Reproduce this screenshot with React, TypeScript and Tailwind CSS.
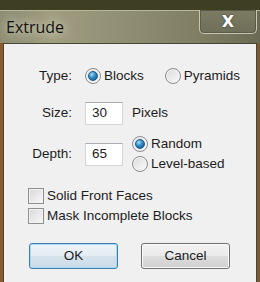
import type { ReactNode } from 'react'

function Radio({ checked, label }: { checked?: boolean; label: string }) {
  return (
    <div className="flex items-center h-5">
      <span className="relative w-[16px] h-[16px] rounded-full border border-[#8a8c8e] bg-gradient-to-br from-[#dadada] to-[#fbfbfb] flex items-center justify-center shadow-[inset_0_0_0_1px_#f4f4f4]">
        {checked && (
          <span className="w-[10px] h-[10px] rounded-full bg-[radial-gradient(circle_at_35%_30%,#a8dcf7_0%,#2c8ac6_45%,#0d4f7e_100%)] border border-[#1d5b85]" />
        )}
      </span>
      <span className="ml-[3px]">{label}</span>
    </div>
  )
}

function Check({ label }: { label: string }) {
  return (
    <div className="flex items-center h-5">
      <span className="w-[16px] h-[16px] border border-[#8e8f8f] bg-gradient-to-br from-[#d8d8d8] to-[#f8f8f8] shadow-[inset_0_0_0_1px_#f2f2f2]" />
      <span className="ml-[3px]">{label}</span>
    </div>
  )
}

function Field({ value }: { value: string }) {
  return (
    <div className="w-[38px] h-[23px] bg-white border border-[#d4d6d9] border-t-[#abadb3] pl-[6px] flex items-center">
      {value}
    </div>
  )
}

function Btn({ children, main }: { children: ReactNode; main?: boolean }) {
  return (
    <div
      className={`h-[26px] rounded-[3px] border flex items-center justify-center ${
        main
          ? 'w-[89px] border-[#3c7fb1] shadow-[inset_0_0_0_1px_#a8d8f2] bg-[linear-gradient(#eef4f8_0%,#e4edf3_48%,#d6e3ec_52%,#cadbe7_100%)]'
          : 'w-[89px] border-[#707070] shadow-[inset_0_0_0_1px_#fbfbfb] bg-[linear-gradient(#f2f2f2_0%,#ebebeb_48%,#dddddd_52%,#cfcfcf_100%)]'
      }`}
    >
      {children}
    </div>
  )
}

export default function App() {
  return (
    <div className="w-[260px] h-[282px] overflow-hidden bg-[#3d3e22] flex flex-col font-['Liberation_Sans',Arial,sans-serif] text-[13.5px] text-[#1c1c1c]">
      {/* window frame */}
      <div className="mt-[10px] flex-1 flex flex-col border-t border-[#b9b79c] bg-[linear-gradient(90deg,#8e8d72_0%,#a09d80_20%,#8c8b70_55%,#7d7c62_80%,#6a6a54_100%)]">
        <div className="h-[32px] flex justify-between">
          <div className="pl-[6px] pt-[8px] font-['Open_Sans',sans-serif] text-[16px] leading-[17px] text-[#141414] [text-shadow:0_0_8px_rgba(230,230,210,0.9),0_0_14px_rgba(230,230,210,0.7)]">
            Extrude
          </div>
          <div className="mr-[3px] -mt-px w-[58px] h-[24px] rounded-b-[5px] border border-t-0 border-[#c9c7b2] bg-[linear-gradient(#7c7b63,#6f6e59)] flex items-center justify-center shadow-[inset_0_0_0_1px_#5a5a47]">
            <span className="font-['DejaVu_Sans',sans-serif] font-bold text-[16px] leading-none text-white [text-shadow:0_0_2px_#333]">
              X
            </span>
          </div>
        </div>

        {/* client area */}
        <div className="flex-1 flex border-l-[3px] border-r-[3px] border-l-[#8a5a2c] border-r-[#7a5a30]">
          <div className="flex-1 bg-[#f0f0f0] border-t border-l border-r border-[#464638]">
            <div className="mt-[23px] flex items-center h-[18px]">
              <div className="w-[68px] text-right">Type:</div>
              <div className="ml-[13px] flex gap-[21px]">
                <Radio checked label="Blocks" />
                <Radio label="Pyramids" />
              </div>
            </div>

            <div className="mt-[17px] flex items-center h-[23px]">
              <div className="w-[68px] text-right">Size:</div>
              <div className="ml-[13px]">
                <Field value="30" />
              </div>
              <div className="ml-[9px]">Pixels</div>
            </div>

            <div className="mt-[9px] flex items-center h-[40px]">
              <div className="w-[68px] text-right">Depth:</div>
              <div className="ml-[13px]">
                <Field value="65" />
              </div>
              <div className="ml-[9px] flex flex-col">
                <Radio checked label="Random" />
                <Radio label="Level-based" />
              </div>
            </div>

            <div className="mt-[12px] ml-[24px] flex flex-col">
              <Check label="Solid Front Faces" />
              <Check label="Mask Incomplete Blocks" />
            </div>

            <div className="mt-[17px] ml-[25px] flex gap-[23px]">
              <Btn main>OK</Btn>
              <Btn>Cancel</Btn>
            </div>
          </div>
        </div>
      </div>
    </div>
  )
}
